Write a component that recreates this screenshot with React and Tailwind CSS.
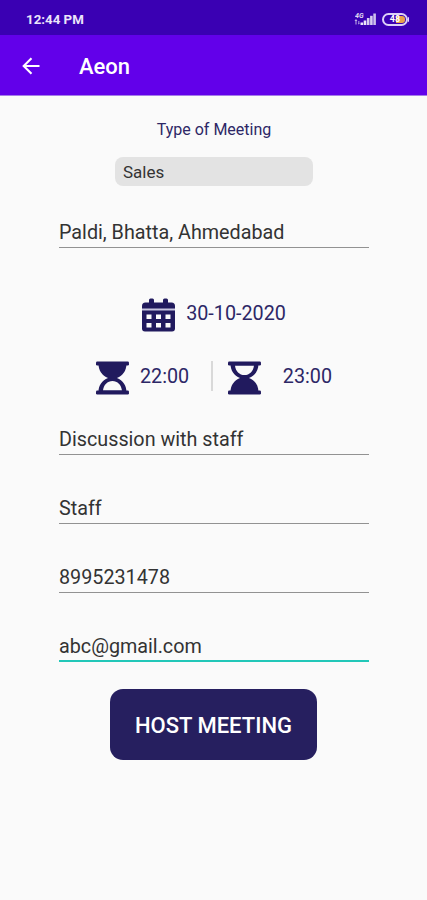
import React, { useState } from 'react';

function StatusIcons() {
    return (
        <div className="flex items-center">
            <svg width="26" height="16" viewBox="0 0 26 16" className="mr-[3px]" fill="#fff">
                <text x="2" y="6.800" fontSize="7" fontWeight="700" fontStyle="italic" fontFamily="Roboto, sans-serif" opacity="0.85">4G</text>
                <path d="M1.500 10l1.500-2 1.400 2h-.9v3.500h-1V10zM5.700 13.500l-.8-1.200h.5V10h.9v2.300h.6z" opacity="0.7" />
                <rect x="7.500" y="11.500" width="2.600" height="2.500" opacity="0.9" />
                <rect x="10.700" y="9.500" width="2.600" height="4.500" opacity="0.9" />
                <rect x="13.900" y="7" width="2.600" height="7" opacity="0.8" />
                <rect x="17.100" y="4.800" width="2.600" height="9.200" opacity="0.8" />
                <rect x="20.300" y="2.500" width="2.600" height="11.500" opacity="0.75" />
            </svg>
            <div className="flex items-center">
                <div className="relative flex h-[13px] w-[26px] items-center justify-center overflow-hidden rounded-full border-2 border-[#ddd0f8]">
                    <span className="absolute top-[1px] right-[1px] h-[7px] w-[9px] rounded-r-[3px] bg-[#e9a04a]" />
                    <span className="relative text-[9px] leading-none font-bold text-white">48</span>
                </div>
                <span className="h-[5px] w-px rounded-r bg-[#e4d9fa]" />
            </div>
        </div>
    );
}

function BackArrow() {
    return (
        <svg width="18" height="18" viewBox="0 0 18 18" fill="none" stroke="#fff" strokeWidth="2.100">
            <path d="M17.500 9H2M9.500 1.200L1.700 9l7.800 7.800" />
        </svg>
    );
}

function CalendarIcon() {
    return (
        <svg width="33" height="34" viewBox="0 0 33 34" fill="#211a5e">
            <rect x="0" y="9" width="33" height="5" fill="#c9c6df" />
            <path d="M7 6V2a1.500 1.500 0 0 1 1.500-1.500h2A1.500 1.500 0 0 1 12 2v4zM21 6V2a1.500 1.500 0 0 1 1.500-1.500h2A1.500 1.500 0 0 1 26 2v4z" />
            <path d="M0 10.500V8a3.500 3.500 0 0 1 3.500-3.500h26A3.500 3.500 0 0 1 33 8v2.500z" />
            <path
                fillRule="evenodd"
                d="M0 12.500h33v18a3 3 0 0 1-3 3H3a3 3 0 0 1-3-3zM4.500 16.500v4.500h5v-4.500zm9.500 0v4.500h5v-4.500zm9.500 0v4.500h5v-4.500zM4.500 25v4.500h5v-4.500zm9.500 0v4.500h5v-4.500zm9.500 0v4.500h5v-4.500z"
            />
        </svg>
    );
}

function HourglassIcon({ className }) {
    return (
        <svg width="33" height="34" viewBox="0 0 33 34" fill="#211a5e" className={className}>
            <rect x="0" y="0.500" width="33" height="4" rx="1.200" />
            <rect x="0" y="29.500" width="33" height="4" rx="1.200" />
            <path d="M2.500 3h28c0 6.500-3.600 11.800-9.500 14H12C6.100 14.800 2.500 9.500 2.500 3z" />
            <path
                fillRule="evenodd"
                d="M2.500 31c0-6.500 3.600-11.800 9.500-14h9c5.900 2.200 9.500 7.500 9.500 14zM7 29.600h19c-.5-5.700-4.500-9.700-9.500-9.700S7.500 23.900 7 29.600z"
            />
        </svg>
    );
}

function Field({ name, value, onChange, active }) {
    return (
        <input
            type="text"
            name={name}
            value={value}
            onChange={onChange}
            className={
                active
                    ? "block h-[35px] w-[310px] border-b-2 border-[#22c7b8] pt-[5px] text-[19.75px] text-[#333333] outline-none"
                    : "block h-[35px] w-[310px] border-b border-[#929292] pt-[5px] text-[19.75px] text-[#333333] outline-none"
            }
        />
    );
}

export default function App() {
    const [form, setForm] = useState({
        location: 'Paldi, Bhatta, Ahmedabad',
        agenda: 'Discussion with staff',
        attendee: 'Staff',
        phone: '8995231478',
        email: 'abc@gmail.com',
    });

    const handleChange = (e) => {
        setForm({ ...form, [e.target.name]: e.target.value });
    };

    return (
        <div className="min-h-screen bg-[#fafafa] font-['Roboto',sans-serif]">
            <div className="flex h-[35px] items-center justify-between bg-[#3a00b3] pt-[3px] pr-[18px] pl-[26px]">
                <span className="pt-px text-[13.300px] font-bold text-[#ebe4fa]">12:44 PM</span>
                <StatusIcons />
            </div>
            <header className="flex h-[61px] items-center border-b border-[#a57ce8] bg-[#6200ea] pt-px pl-[22px]">
                <button type="button" aria-label="Back">
                    <BackArrow />
                </button>
                <h1 className="mt-px ml-[39px] text-[22px] font-medium text-white">Aeon</h1>
            </header>

            <form className="flex flex-col items-center pl-px" onSubmit={(e) => e.preventDefault()}>
                <label className="mt-[22px] h-6 text-[16px] leading-6 text-[#2d2766]">Type of Meeting</label>
                <div className="mt-[15px] flex h-[29px] w-[198px] items-center rounded-[8px] bg-[#e3e3e3] pt-[3px] pl-[8px] text-[17px] text-[#333333]">
                    Sales
                </div>

                <div className="mt-[27px]">
                    <Field name="location" value={form.location} onChange={handleChange} />
                </div>

                <div className="mt-[50px] flex h-[34px] items-center">
                    <CalendarIcon />
                    <span className="ml-[11px] pb-[2px] text-[19.75px] text-[#2d2766]">30-10-2020</span>
                </div>

                <div className="mt-[29px] flex h-[34px] w-[236px] items-center text-[19.75px] text-[#2d2766]">
                    <HourglassIcon />
                    <span className="ml-[11px] w-[50px] pb-[3px]">22:00</span>
                    <span className="mb-[4px] ml-[21px] h-[30px] w-[2px] bg-[#d9d9d9]" />
                    <HourglassIcon className="ml-[15px] rotate-180" />
                    <span className="ml-[22px] pb-[3px]">23:00</span>
                </div>

                <div className="mt-[25px] flex flex-col gap-[34px]">
                    <Field name="agenda" value={form.agenda} onChange={handleChange} />
                    <Field name="attendee" value={form.attendee} onChange={handleChange} />
                    <Field name="phone" value={form.phone} onChange={handleChange} />
                    <Field name="email" value={form.email} onChange={handleChange} active />
                </div>

                <button
                    type="submit"
                    className="mt-[27px] mr-px h-[71px] w-[207px] rounded-[13px] bg-[#261f5f] pt-[2px] text-[22px] font-medium text-white"
                >
                    HOST MEETING
                </button>
            </form>
        </div>
    );
}
